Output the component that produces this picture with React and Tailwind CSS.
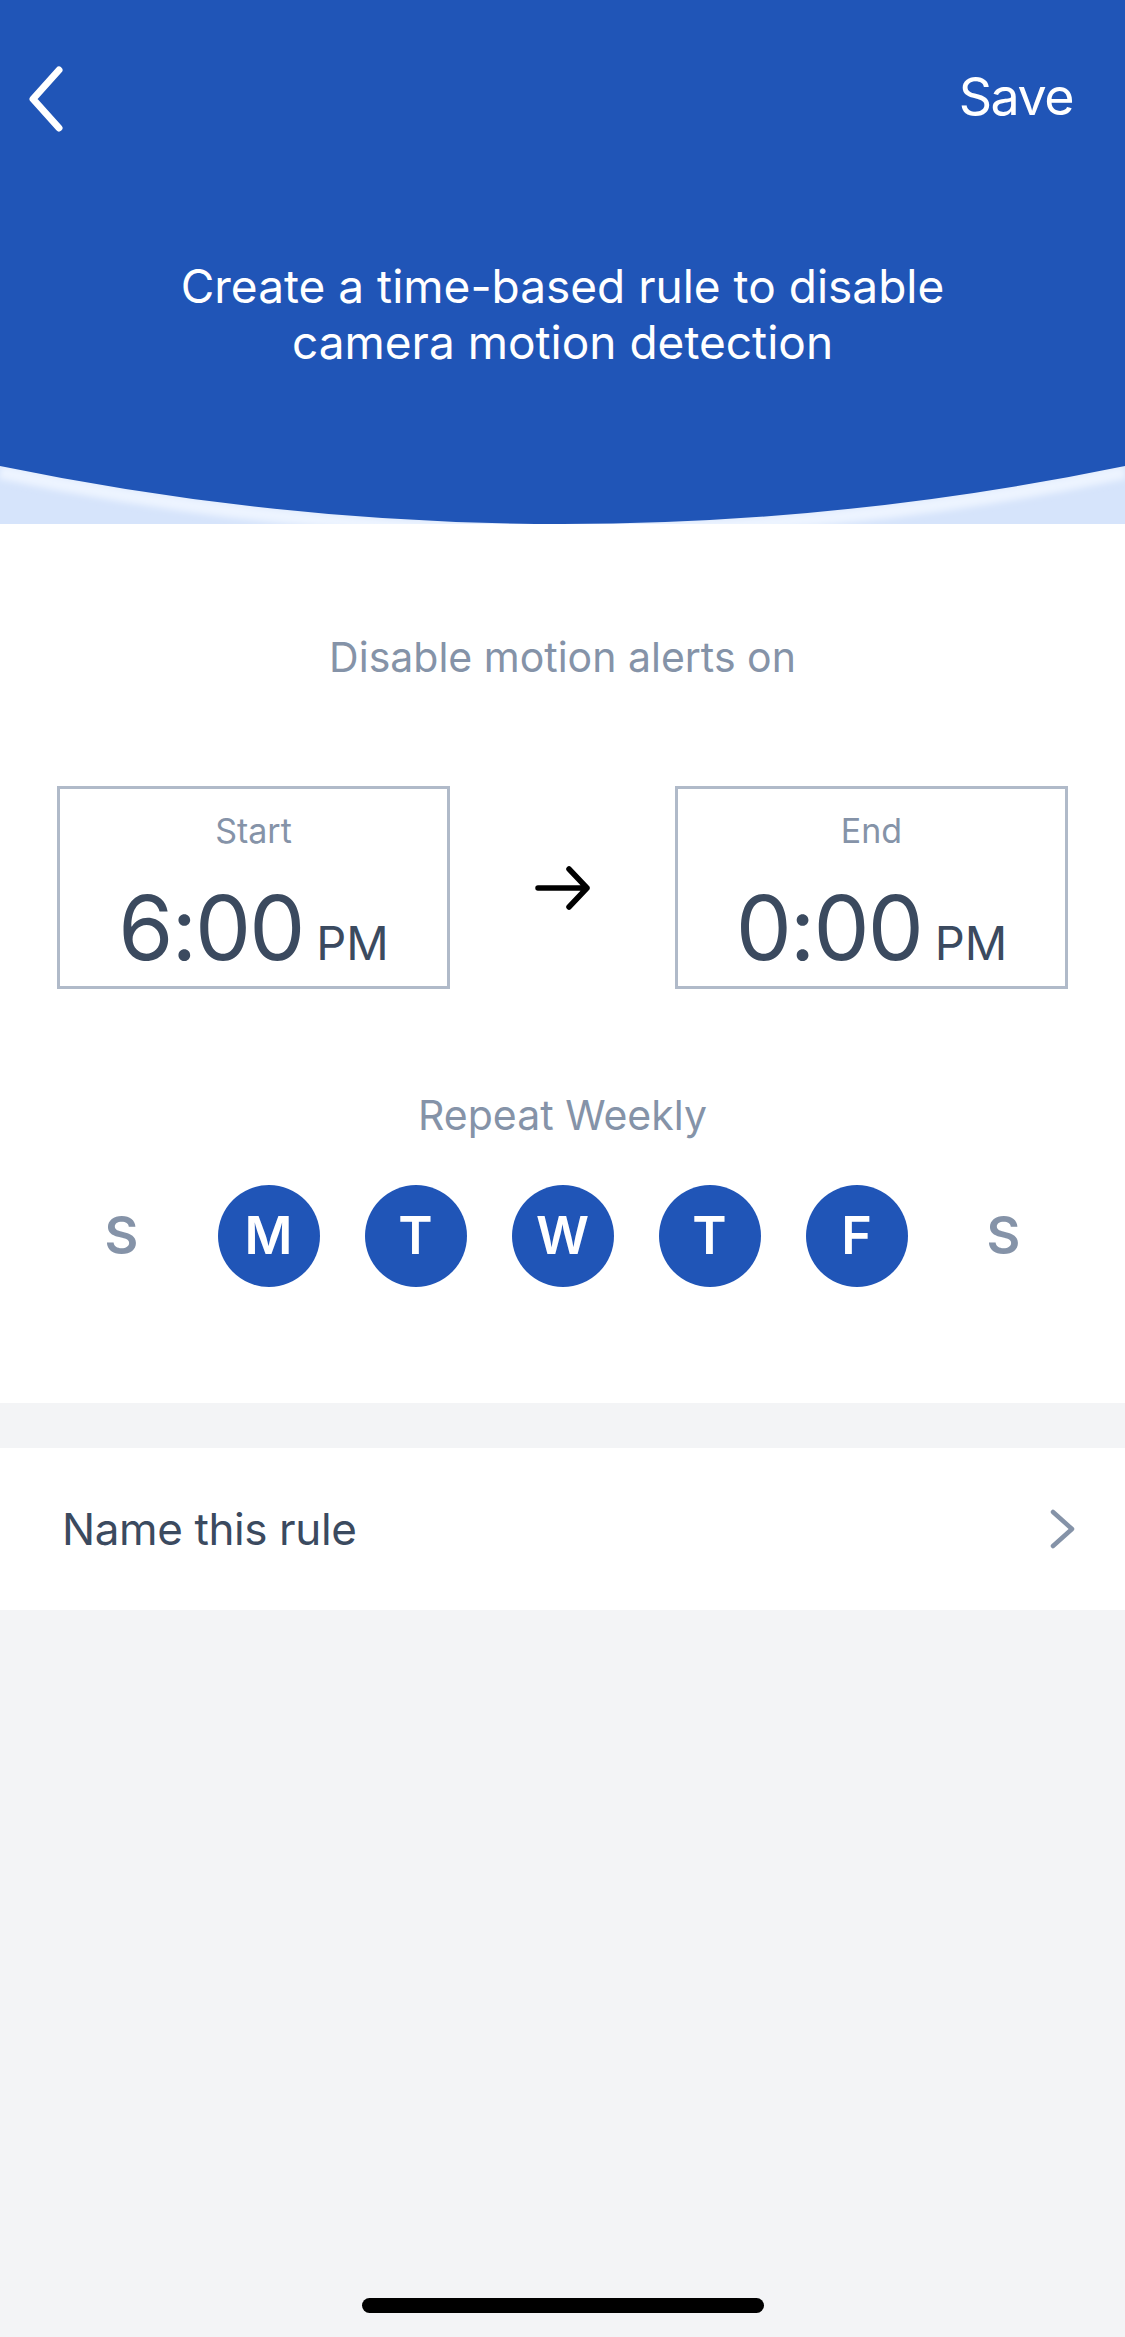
import React, { useState } from 'react';

const DAYS = [
  { key: 'sun', label: 'S' },
  { key: 'mon', label: 'M' },
  { key: 'tue', label: 'T' },
  { key: 'wed', label: 'W' },
  { key: 'thu', label: 'T' },
  { key: 'fri', label: 'F' },
  { key: 'sat', label: 'S' },
];

const BackIcon = () => (
  <svg width="40" height="66" viewBox="0 0 40 66" fill="none">
    <path d="M33 4 L7 33 L33 62" stroke="white" strokeWidth="7" strokeLinecap="round" strokeLinejoin="round" />
  </svg>
);

const ArrowIcon = () => (
  <svg width="56" height="44" viewBox="0 0 56 44" fill="none">
    <path d="M3 22 H52 M34 3 L52 22 L34 41" stroke="black" strokeWidth="5.5" strokeLinecap="round" strokeLinejoin="round" />
  </svg>
);

const ChevronIcon = () => (
  <svg width="28" height="40" viewBox="0 0 28 40" fill="none">
    <path d="M4 3 L23 20 L4 37" stroke="#8593a8" strokeWidth="4.5" strokeLinecap="round" strokeLinejoin="round" />
  </svg>
);

// curved bottom edge of the blue header
const HeaderCurve = () => (
  <svg className="block" width="1125" height="58" viewBox="0 0 1125 58" preserveAspectRatio="none">
    <defs>
      <filter id="soft" x="-5%" y="-50%" width="110%" height="200%">
        <feGaussianBlur stdDeviation="3" />
      </filter>
    </defs>
    <rect width="1125" height="58" fill="#d6e4fb" />
    <path d="M0 6 Q562 124 1125 6" stroke="#edf4ff" strokeWidth="14" fill="none" filter="url(#soft)" />
    <path d="M0 0 H1125 V0 Q562 116 0 0 Z" fill="#2055b7" />
  </svg>
);

const TimeBox = ({ label, time, period }) => (
  <div className="w-[393px] h-[203px] border-[3px] border-[#b0bac9] flex flex-col items-center">
    <div className="mt-[22px] text-[34px] leading-[40px] text-[#8593a8]">{label}</div>
    <div className="mt-[32px] flex items-baseline">
      <span className="text-[89px] leading-none text-[#3b4a5f] tracking-[-2px]">{time}</span>
      <span className="ml-[13px] text-[47px] leading-none text-[#3b4a5f]">{period}</span>
    </div>
  </div>
);

export default function App() {
  const [active, setActive] = useState(['mon', 'tue', 'wed', 'thu', 'fri']);

  const toggle = (key) =>
    setActive((cur) => (cur.includes(key) ? cur.filter((k) => k !== key) : [...cur, key]));

  return (
    <div className="min-h-[2337px] w-[1125px] bg-[#f3f4f6] flex flex-col font-['Inter',sans-serif] relative">
      {/* Header */}
      <div className="bg-[#2055b7] h-[466px] flex flex-col">
        <div className="h-[200px] flex items-start justify-between pl-[26px] pr-[52px] pt-[66px]">
          <button className="w-[40px] h-[66px]">
            <BackIcon />
          </button>
          <button className="text-white text-[52px] leading-[64px] tracking-[-1.5px] -mt-[1px]">Save</button>
        </div>
        <div className="mt-[58px] text-center text-white text-[46px] leading-[56px] px-[120px]">
          Create a time-based rule to disable
          <br />
          camera motion detection
        </div>
      </div>
      <HeaderCurve />

      {/* Schedule */}
      <div className="bg-white pt-[109px] pb-[116px] flex flex-col items-center">
        <div className="text-[41px] leading-[48px] text-[#8593a8]">Disable motion alerts on</div>

        <div className="mt-[105px] w-full px-[57px] flex items-center justify-between">
          <TimeBox label="Start" time="6:00" period="PM" />
          <ArrowIcon />
          <TimeBox label="End" time="0:00" period="PM" />
        </div>

        <div className="mt-[102px] text-[41px] leading-[48px] text-[#8593a8]">Repeat Weekly</div>

        <div className="mt-[46px] w-full px-[48px] grid grid-cols-7">
          {DAYS.map((day) => {
            const on = active.includes(day.key);
            return (
              <div key={day.key} className="flex justify-center">
                <button
                  onClick={() => toggle(day.key)}
                  className={
                    on
                      ? 'w-[102px] h-[102px] rounded-full bg-[#2055b7] text-white text-[52px] font-semibold flex items-center justify-center'
                      : 'w-[102px] h-[102px] rounded-full text-[#8593a8] text-[52px] font-semibold flex items-center justify-center'
                  }
                >
                  {day.label}
                </button>
              </div>
            );
          })}
        </div>
      </div>

      {/* Rule name */}
      <div className="mt-[45px] bg-white h-[162px] flex items-center justify-between pl-[62px] pr-[48px]">
        <span className="text-[44px] tracking-[-0.4px] text-[#3b4a5f]">Name this rule</span>
        <ChevronIcon />
      </div>

      {/* Home indicator */}
      <div className="absolute left-[362px] top-[2298px] w-[402px] h-[15px] rounded-full bg-black" />
    </div>
  );
}
